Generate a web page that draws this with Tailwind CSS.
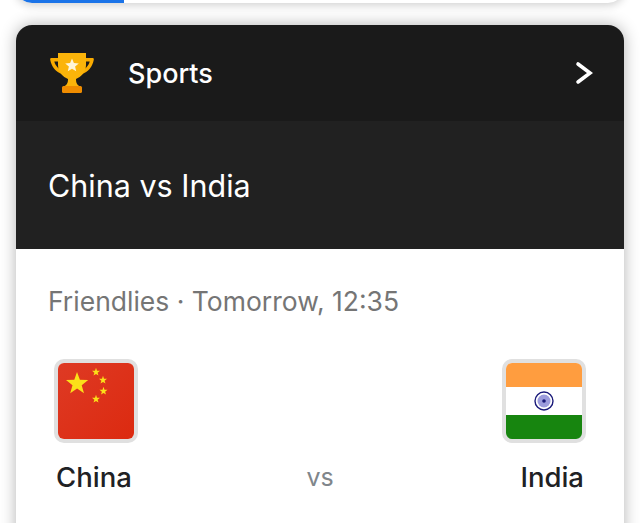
<!DOCTYPE html>
<html lang="en">
<head>
<meta charset="UTF-8">
<title>Sports</title>
<script src="https://cdn.jsdelivr.net/npm/@tailwindcss/browser@4"></script>
</head>
<body class="bg-white font-['Inter','Liberation_Sans',Arial,sans-serif]">
<div class="w-[640px] h-[523px] overflow-hidden bg-white px-4">
  <!-- previous card, only its bottom edge is visible -->
  <div class="-mt-[13px] h-[16px] rounded-b-2xl bg-white overflow-hidden shadow-[0_2px_10px_rgba(0,0,0,0.2)]">
    <div class="w-[108px] h-full bg-[#1a73e8]"></div>
  </div>

  <div class="mt-[22px] h-[520px] rounded-t-2xl bg-white overflow-hidden shadow-[0_0_16px_rgba(0,0,0,0.3)]">
    <div class="h-[96px] bg-[#1a1a1a] flex items-center pl-[34px] pr-[31px]">
      <svg class="w-[44px] h-[40px]" viewBox="0 0 44 40">
        <path d="M8 5H1.500C.500 5 0 5.700 .200 6.700 1.500 13.500 5.500 19 12.500 21l1-3C9 16.500 5.500 13 4.300 8.500H9z" fill="#f9ab00"/>
        <path d="M36 5h6.500c1 0 1.500 .7 1.300 1.700C42.500 13.500 38.500 19 31.500 21l-1-3c4.500-1.500 8-5 9.200-9.500H35z" fill="#f9ab00"/>
        <path d="M8 0h28v12c0 7-5 12-10 14 0 4 1 6 5 8H13c4-2 5-4 5-8C13 24 8 19 8 12z" fill="#fbb40a"/>
        <rect x="12" y="33" width="20" height="7" rx="1.500" fill="#ef8c00"/>
        <path d="M22 5.500l1.900 4.500 4.900 .4-3.700 3.100 1.100 4.700-4.200-2.500-4.200 2.500 1.100-4.700-3.700-3.100 4.900-.4z" fill="#fff6d8"/>
      </svg>
      <span class="ml-[34px] text-[27px] leading-none font-medium text-white">Sports</span>
      <svg class="ml-auto w-[18px] h-[24px]" viewBox="0 0 18 24" fill="none" stroke="#fff" stroke-width="3.600" stroke-linecap="round">
        <path d="M3 3l12 9-12 9"/>
      </svg>
    </div>

    <div class="h-[128px] bg-[#212121] flex items-center px-[32px]">
      <span class="pt-[2px] text-[30.5px] leading-none text-white">China vs India</span>
    </div>

    <div class="px-[32px] pt-[37px]">
      <p class="text-[26.5px] leading-[30px] text-[#757575]">Friendlies · Tomorrow, 12:35</p>

      <div class="mt-[43px] px-[6px] flex justify-between">
        <div class="w-[84px] h-[84px] rounded-[10px] border-4 border-[#e0e0e0] overflow-hidden">
          <svg class="w-full h-full" viewBox="0 0 76 76">
            <defs>
              <linearGradient id="cn" x1="0" y1="0" x2="1" y2="1">
                <stop offset="0" stop-color="#de3a24"/>
                <stop offset="1" stop-color="#dc2a10"/>
              </linearGradient>
              <path id="star" d="M0-4.200l1 2.900 3 .1-2.400 1.900 .9 2.900-2.500-1.700-2.500 1.700 .9-2.900-2.400-1.900 3-.1z" fill="#fbe019"/>
            </defs>
            <rect width="76" height="76" fill="url(#cn)"/>
            <path d="M19 9l2.900 7.800 8.300.3-6.500 5.100 2.300 8-6.900-4.600-6.900 4.600 2.300-8-6.500-5.100 8.300-.3z" fill="#fbe019"/>
            <use href="#star" x="38" y="9"/>
            <use href="#star" x="45" y="17"/>
            <use href="#star" x="45.500" y="28"/>
            <use href="#star" x="38" y="36"/>
          </svg>
        </div>
        <div class="w-[84px] h-[84px] rounded-[10px] border-4 border-[#e0e0e0] overflow-hidden">
          <svg class="w-full h-full" viewBox="0 0 76 76">
            <rect width="76" height="24" fill="#ff9d3f"/>
            <rect y="24" width="76" height="28" fill="#fff"/>
            <rect y="52" width="76" height="24" fill="#17850f"/>
            <circle cx="38" cy="38" r="9" fill="#fff" stroke="#1a1a7a" stroke-width="1.400"/>
            <circle cx="38" cy="38" r="6.500" fill="#9c9cdc"/>
            <circle cx="38" cy="38" r="1.800" fill="#1a1a7a"/>
          </svg>
        </div>
      </div>

      <div class="mt-[17px] pl-[8px] pr-[8px] grid grid-cols-[1fr_auto_1fr] items-center leading-[34px]">
        <span class="text-[27.5px] font-medium text-[#202124]">China</span>
        <span class="text-[25px] text-[#80868b]">vs</span>
        <span class="text-[27.5px] text-right font-medium text-[#202124]">India</span>
      </div>
    </div>
  </div>
</div>
</body>
</html>
